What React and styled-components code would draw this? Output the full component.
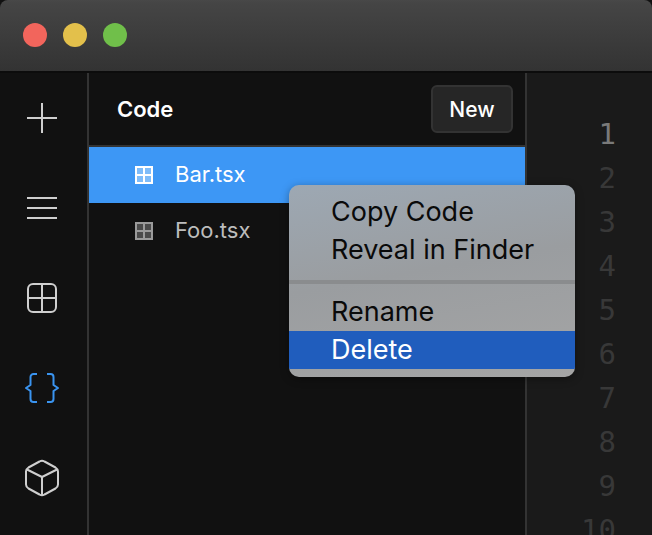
import React from "react";
import styled, { createGlobalStyle } from "styled-components";

const GlobalStyle = createGlobalStyle`
  html, body {
    margin: 0;
    height: 100%;
    background: #111;
    overflow: hidden;
  }
  * {
    box-sizing: border-box;
  }
`;

const Window = styled.div`
  position: relative;
  width: 652px;
  height: 535px;
  display: flex;
  flex-direction: column;
  overflow: hidden;
  font-family: Inter, "Liberation Sans", sans-serif;
`;

const TitleBar = styled.div`
  flex: none;
  height: 73px;
  display: flex;
  align-items: center;
  gap: 16px;
  padding: 0 0 1px 23px;
  background: linear-gradient(#484848 0, #454545 3px, #333 71px);
  border-bottom: 2px solid #0c0c0c;
  border-radius: 8px 8px 0 0;
`;

const Light = styled.span`
  width: 24px;
  height: 24px;
  border-radius: 50%;
  background: ${(p) => p.$color};
`;

const Body = styled.div`
  flex: 1;
  min-height: 0;
  display: flex;
`;

const Rail = styled.nav`
  flex: none;
  width: 89px;
  display: flex;
  flex-direction: column;
  align-items: center;
  gap: 50px;
  padding: 25px 3px 0 0;
  background: #111;
  border-right: 2px solid #333;
`;

const RailIcon = styled.svg`
  display: block;
  width: 40px;
  height: 40px;
  fill: none;
  stroke: ${(p) => (p.$active ? "#3a94f0" : "#cfcfcf")};
  stroke-width: 2;
  stroke-linejoin: round;
`;

const Panel = styled.section`
  flex: none;
  width: 438px;
  display: flex;
  flex-direction: column;
  background: #111;
  border-right: 2px solid #333;
`;

const PanelHeader = styled.header`
  flex: none;
  height: 74px;
  display: flex;
  align-items: center;
  justify-content: space-between;
  padding: 0 12px 0 28px;
  border-bottom: 2px solid #333;
`;

const PanelTitle = styled.h2`
  margin: 0;
  font-size: 22px;
  font-weight: 600;
  color: #fff;
`;

const NewButton = styled.button`
  width: 82px;
  height: 48px;
  padding: 0;
  background: #262626;
  border: 2px solid #333;
  border-radius: 6px;
  color: #fff;
  font: 500 21px Inter, "Liberation Sans", sans-serif;
`;

const FileRow = styled.div`
  height: 56px;
  display: flex;
  align-items: center;
  gap: 22px;
  padding-left: 46px;
  background: ${(p) => (p.$selected ? "#3d97f5" : "transparent")};
  color: ${(p) => (p.$selected ? "#fff" : "#bdbdbd")};
  font-size: 22px;
  font-weight: 400;
`;

const FileName = styled.span`
  margin-bottom: 2px;
`;

const FileGlyph = styled.svg`
  display: block;
  flex: none;
  width: 18px;
  height: 18px;
  shape-rendering: crispEdges;
`;

const Editor = styled.div`
  flex: 1;
  display: flex;
  flex-direction: column;
  align-items: flex-end;
  padding: 39px 36px 0 0;
  background: #1a1a1a;
  overflow: hidden;
`;

const LineNumber = styled.div`
  flex: none;
  height: 44px;
  line-height: 44px;
  font-family: "DejaVu Sans Mono", monospace;
  font-size: 29px;
  color: ${(p) => (p.$current ? "#7a7a7a" : "#383838")};
`;

const Menu = styled.div`
  position: absolute;
  left: 289px;
  top: 185px;
  width: 286px;
  padding: 8px 0;
  border-radius: 10px;
  background: linear-gradient(170deg, #9da8b3 0%, #9a9da0 45%, #a5a5a5 100%);
  box-shadow: 0 2px 8px rgba(0, 0, 0, 0.35);
  overflow: hidden;
`;

const MenuItem = styled.div`
  height: 38px;
  line-height: 38px;
  padding-left: 42px;
  font-size: 27px;
  color: ${(p) => (p.$active ? "#fff" : "#0a0a0a")};
  background: ${(p) => (p.$active ? "#205dbd" : "transparent")};
`;

const MenuSeparator = styled.div`
  height: 4px;
  margin: 11px 0 9px;
  background: #8a8c8e;
`;

function GridGlyph({ stroke, fill }) {
  return (
    <FileGlyph viewBox="0 0 18 18">
      <rect x="0" y="0" width="18" height="18" fill={stroke} />
      <rect x="2" y="2" width="6" height="6" fill={fill} />
      <rect x="10" y="2" width="6" height="6" fill={fill} />
      <rect x="2" y="10" width="6" height="6" fill={fill} />
      <rect x="10" y="10" width="6" height="6" fill={fill} />
    </FileGlyph>
  );
}

const lines = [1, 2, 3, 4, 5, 6, 7, 8, 9, 10];

export default function App() {
  return (
    <>
      <GlobalStyle />
      <Window>
        <TitleBar>
          <Light $color="#f2655c" />
          <Light $color="#e3c04b" />
          <Light $color="#70bf4a" />
        </TitleBar>
        <Body>
          <Rail>
            <RailIcon viewBox="0 0 40 40">
              <path d="M5 20H35M20 5V35" />
            </RailIcon>
            <RailIcon viewBox="0 0 40 40">
              <path d="M5 10H35M5 20H35M5 30H35" />
            </RailIcon>
            <RailIcon viewBox="0 0 40 40">
              <rect x="6" y="6" width="28" height="28" rx="5" />
              <path d="M6 20H34M20 6V34" />
            </RailIcon>
            <RailIcon viewBox="0 0 40 40" $active>
              <path d="M15 6H11.5a3 3 0 0 0-3 3V17L4 20L8.500 23V31a3 3 0 0 0 3 3H15" />
              <path d="M25 6H28.500a3 3 0 0 1 3 3V17L36 20L31.500 23V31a3 3 0 0 1-3 3H25" />
            </RailIcon>
            <RailIcon viewBox="0 0 40 40">
              <path d="M17.500 3.500Q20 2 22.500 3.500L33.500 9.500Q36 11 36 13.500V26.500Q36 29 33.500 30.500L22.500 36.500Q20 38 17.500 36.500L6.500 30.500Q4 29 4 26.500V13.500Q4 11 6.500 9.500Z" />
              <path d="M5 11.500L20 19L35 11.500M20 19V37" />
            </RailIcon>
          </Rail>
          <Panel>
            <PanelHeader>
              <PanelTitle>Code</PanelTitle>
              <NewButton>New</NewButton>
            </PanelHeader>
            <FileRow $selected>
              <GridGlyph stroke="#fff" fill="#7fbcf9" />
              <FileName>Bar.tsx</FileName>
            </FileRow>
            <FileRow>
              <GridGlyph stroke="#9a9a9a" fill="#4a4a4a" />
              <FileName>Foo.tsx</FileName>
            </FileRow>
          </Panel>
          <Editor>
            {lines.map((n) => (
              <LineNumber key={n} $current={n === 1}>
                {n}
              </LineNumber>
            ))}
          </Editor>
        </Body>
        <Menu>
          <MenuItem>Copy Code</MenuItem>
          <MenuItem>Reveal in Finder</MenuItem>
          <MenuSeparator />
          <MenuItem>Rename</MenuItem>
          <MenuItem $active>Delete</MenuItem>
        </Menu>
      </Window>
    </>
  );
}
